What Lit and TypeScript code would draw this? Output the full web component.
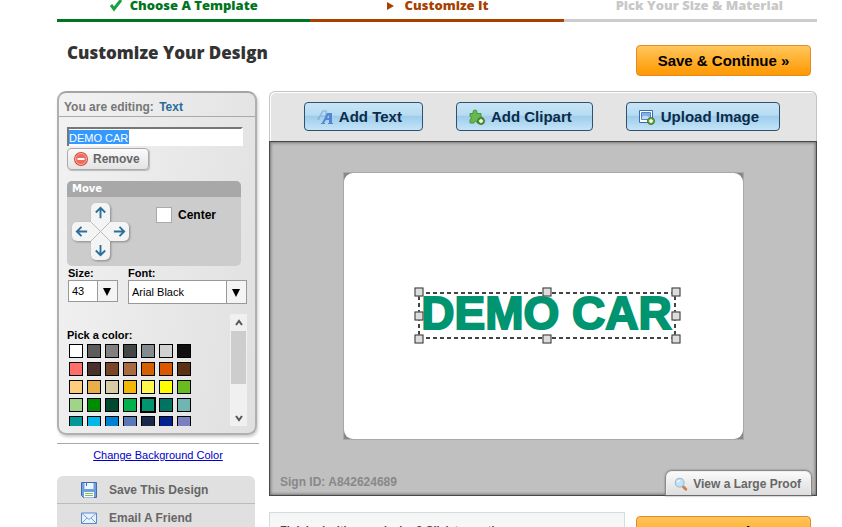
import { LitElement, html, css, svg } from "lit";
import { customElement, state } from "lit/decorators.js";
import { classMap } from "lit/directives/class-map.js";
import { styleMap } from "lit/directives/style-map.js";

const COLORS = [
  "#ffffff", "#5c5c5a", "#808080", "#434748", "#838b8e", "#d0d2d2", "#101010",
  "#ff6e6a", "#4a302c", "#7a4626", "#a86c40", "#d66000", "#dc5800", "#5c3216",
  "#ffce7c", "#e8ae48", "#d8cca4", "#f0b800", "#fff84c", "#ffff00", "#68bc20",
  "#a0d488", "#008c00", "#004830", "#00b04c", "#009470", "#007460", "#70b4b4",
  "#009898", "#00b8e8", "#0080d0", "#5878b8", "#182848", "#002090", "#7880c0",
];

const MOVES = [
  { name: "up", path: "M8 14V3M3 8l5-5 5 5" },
  { name: "left", path: "M14 8H3M8 3L3 8l5 5" },
  { name: "right", path: "M2 8h11M8 3l5 5-5 5" },
  { name: "down", path: "M8 2v11M3 8l5 5 5-5" },
];

const HANDLES = ["nw", "n", "ne", "w", "e", "sw", "s", "se"];

const icon = (w: number, body: unknown) =>
  html`<svg class="icon" width=${w} height=${w} viewBox="0 0 16 16" aria-hidden="true">${body}</svg>`;

const icons = {
  text: svg`<path d="M0 10h3M1 10L6 2h3v6M3 7h5" fill="none" stroke="#86aede" stroke-width="1.2"/>
    <path d="M4 14h1l5-10h5v10h1v1h-5v-1h1v-3H9l-2 3h1v1H4zM10 9h2V6z" fill="#5487d2"/>`,
  clip: svg`<path d="M1 4.500h3V3a2 2 0 014 0v1.500h4V8a2 2 0 010 4v2H8v-1a2 2 0 00-3 0v1H1v-3.500a1.500 1.500 0 000-3z" fill="#68b852" stroke="#45983a"/>
    <circle cx="12" cy="12" r="3.500" fill="#5a9a34" stroke="#3f7c24"/><path d="M12 10v4M10 12h4" stroke="#fff" stroke-width="1.400"/>`,
  image: svg`<path d="M.5 1.500h13v12H.5z" fill="#fff" stroke="#386cae"/><path d="M2.500 3.500h9v7h-9z" fill="#82b0e4" stroke="#5286c4"/>
    <path d="M3 8q4-3 8 1v1H3z" fill="#c3dbf3"/>
    <circle cx="12" cy="12" r="3.500" fill="#6ba442" stroke="#457d28"/><path d="M12 10v4M10 12h4" stroke="#fff" stroke-width="1.400"/>`,
  remove: svg`<circle cx="8" cy="8" r="7" fill="#d9483c"/><circle cx="8" cy="8" r="5.500" fill="#ec6c5e" stroke="#f6b0a8"/><path d="M4.500 7h7v2h-7z" fill="#fff"/>`,
  save: svg`<path d="M.5.5h15v15h-13l-2-2z" fill="#6f9fdf" stroke="#3d6cb4"/><path d="M3.500 1h9v6h-9z" fill="#eef5fd"/><path d="M5 1h1v3H5z" fill="#3d6cb4"/>
    <path d="M3 10h10v5.500H3z" fill="#fff"/><path d="M4 11.500h8M4 13.500h8" stroke="#7cc05c"/>`,
  mail: svg`<path d="M.5 3h15v10.500H.5z" fill="#e8f1fc" stroke="#5a8acb"/><path d="M1 3.500l7 6 7-6M1 13l5-5M15 13l-5-5" fill="none" stroke="#7ba3d9"/>`,
  magnify: svg`<path d="M9.500 10l4 4" stroke="#c98150" stroke-width="3.200" stroke-linecap="round"/><circle cx="6.500" cy="6.500" r="5" fill="#c4e2f7" stroke="#a4bfd4" stroke-width="1.500"/><path d="M4 6a3 3 0 013-2" stroke="#fff" stroke-width="1.400" fill="none"/>`,
};

@customElement("app-root")
export class AppRoot extends LitElement {
  @state() private selected = 25;
  @state() private label = "DEMO CAR";

  static styles = css`
    :host { display: block; height: 100vh; overflow: hidden; background: #fff;
      font: 11px/16px "Liberation Sans", Arial, sans-serif; color: #000; }
    * { box-sizing: border-box; }
    button, input, select { font: inherit; color: inherit; margin: 0; }
    button { cursor: pointer; }
    .page { margin: 0 25px 0 57px; }
    .black { font-family: "Open Sans", "Arial Black", sans-serif; font-weight: 800; }
    .steps { display: grid; grid-template-columns: repeat(3, 1fr); margin: 0; padding: 0; list-style: none; }
    .step { display: flex; justify-content: center; align-items: center; gap: 8px; height: 22px; padding-bottom: 8px;
      border-bottom: 3px solid; font-size: 13px; line-height: 11px; white-space: nowrap; }
    .done { color: #007420; }
    .now { color: #a84000; gap: 10px; }
    .next { padding-left: 18px; color: #c8c8c8; border-color: #ccc; }
    .heading { display: flex; justify-content: space-between; height: 69px; padding: 23px 6px 0 10px; }
    h1 { margin: 0; font-size: 17px; line-height: 16px; color: #333; }
    .cta { width: 175px; height: 31px; padding: 0; border: 1px solid #e08a2c; border-radius: 4px;
      background: linear-gradient(#ffc65c, #ff9800); font-size: 15px; font-weight: bold; color: #000; }
    .cols { display: grid; grid-template-columns: 200px minmax(0, 1fr); gap: 12px; align-items: start; }
    .panel { border: 2px solid #b0b0b0; border-top-color: #a4a4a4; border-radius: 9px; height: 344px;
      background: linear-gradient(100deg, #f2f2f2, #e0e0e0); box-shadow: 1px 2px 3px #ccc; }
    .tab { height: 24px; padding: 6px 0 0 5px; border-bottom: 1px solid #aaa; font-size: 12px; font-weight: bold; color: #777; }
    .tab b { margin-left: 2px; color: #2c6c98; }
    .body { padding: 10px 8px 0; }
    .field { display: flex; width: 176px; height: 19px; border: 2px solid #777; border-right-color: #fff; border-bottom: 0; background: #fff; }
    .field input { width: 100%; min-width: 0; border: 0; padding: 0; outline: 0; font-size: 11px; color: #fff;
      background: linear-gradient(#3399ff, #3399ff) 0 1px / 60px 14px no-repeat; }
    .remove { display: flex; align-items: center; gap: 4px; height: 22px; margin: 2px 0 11px; padding: 0 8px 0 5px; border: 1px solid #aaa;
      border-radius: 4px; background: linear-gradient(#fafafa, #e4e4e4); box-shadow: 1px 1px 1px #bbb; font-size: 12px; font-weight: bold; color: #666; }
    .move { width: 174px; height: 85px; border-radius: 5px; overflow: hidden; background: #ccc; }
    .move h2 { margin: 0; padding-left: 5px; font: bold 10px/16px "DejaVu Sans", Verdana, sans-serif; color: #fff; background: #a8a8a8; }
    .mover { display: flex; gap: 27px; padding: 6px 5px 0; }
    .pad { display: grid; grid-template-columns: repeat(3, 19px); grid-template-rows: repeat(3, 19px);
      grid-template-areas: ". up ." "left mid right" ". down ."; filter: drop-shadow(1px 1px 1px #888); }
    .pad button { padding: 0; border: 0; background: #f4f4f4; display: grid; place-items: center; color: #2a7098; }
    .up { grid-area: up; border-radius: 5px 5px 0 0; }
    .left { grid-area: left; border-radius: 5px 0 0 5px; }
    .right { grid-area: right; border-radius: 0 5px 5px 0; }
    .down { grid-area: down; border-radius: 0 0 5px 5px; }
    .mid { grid-area: mid; background: #f4f4f4; }
    .icon, .pad svg, .mark { display: block; flex: none; }
    .center { display: flex; align-items: center; gap: 6px; height: 16px; margin-top: 4px; font-size: 12px; font-weight: bold; }
    .center input { appearance: none; width: 16px; height: 16px; border: 1px solid #aaa; background: #fff; }
    .pickers { display: flex; gap: 10px; margin: 0 -4px 10px 1px; }
    .pickers label { display: block; font-weight: bold; line-height: 14px; }
    .combo { display: block; position: relative; }
    .combo select { appearance: none; display: block; width: 100%; height: 22px; padding: 0 3px; border: 1px solid #999; border-radius: 0; background: #fff; font-size: 11px; }
    .combo .wide { height: 24px; }
    .combo svg { position: absolute; right: 1px; top: 1px; height: calc(100% - 2px); width: 20px; border-left: 1px solid #999; background: #f4f4f4; pointer-events: none; }
    .size { width: 50px; }
    .font { width: 119px; }
    .colors { display: flex; justify-content: space-between; width: 180px; height: 112px; overflow: hidden; }
    .colors h2 { margin: 14px 0 0; font-size: 11px; line-height: 14px; }
    .swatches { display: grid; grid-template-columns: repeat(7, 14px); gap: 4px; padding: 2px; }
    .swatch { width: 14px; height: 14px; padding: 0; border: 1px solid #000; }
    .on { outline: 1px solid #000; }
    .scroll { display: flex; flex-direction: column; align-items: center; width: 17px; height: 112px; background: #f0f0f0; }
    .scroll svg, .thumb { flex: none; }
    .thumb { width: 15px; height: 53px; background: #cdcdcd; }
    .rule { margin: 8px -2px 3px 0; border: 0; border-top: 1px solid #aaa; }
    .change { display: block; text-align: center; color: #0000c8; line-height: 16px; font-size: 11px; margin-bottom: 13px; padding-left: 2px; }
    .menu { margin: 0 2px 0 0; padding: 0; list-style: none; border-radius: 6px 6px 0 0; overflow: hidden; background: #e0e0e0; }
    .menu a { display: flex; align-items: center; gap: 12px; height: 28px; padding-left: 24px; border-bottom: 1px solid #bbb;
      font-size: 12px; font-weight: bold; color: #666; text-decoration: none; }
    .tools { display: flex; justify-content: center; align-items: center; gap: 33px; height: 50px; padding-right: 2px; border: 1px solid #c4c4c4;
      border-bottom: 0; border-radius: 6px 6px 0 0; background: #e4e4e4; box-shadow: inset 1px 1px #fff; }
    .tool { display: flex; align-items: center; gap: 6px; height: 29px; padding: 0 20px 0 12px; border: 1px solid #31506c; border-radius: 4px;
      background: linear-gradient(#c8e4f6, #b6dcf2 45%, #9ecdeb 50%, #c4e4f8); font-size: 15px; font-weight: bold; color: #0b2b48; white-space: nowrap; }
    .canvas { display: grid; grid-template-rows: 1fr auto; height: 355px; padding: 30px 0 0; border: 1px solid #484848; background: #c0c0c0; box-shadow: inset 0 0 3px 1px #777; }
    .sign { display: grid; place-items: center; justify-self: center; width: 401px; height: 268px; border: 1px solid #a8a8a8; background: #888; }
    .paper { display: grid; place-items: center; width: 100%; height: 100%; border-radius: 9px; background: #fff; padding: 19px 0 0 7px; }
    .art { position: relative; width: 258px; height: 47px; display: grid; place-items: center; }
    .art .frame { position: absolute; inset: 0; width: 100%; height: 100%; }
    .art span { font-size: 46px; font-weight: bold; line-height: 40px; padding-bottom: 6px; color: #009470;
      -webkit-text-stroke: 2px #009470; white-space: nowrap; }
    .handle { position: absolute; width: 9px; height: 9px; border: 1px solid #333; background: #ddd; transform: translate(-50%, -50%); }
    .nw, .w, .sw { left: 1px; } .n, .s { left: 50%; } .ne, .e, .se { left: 100%; }
    .nw, .n, .ne { top: 0; } .w, .e { top: 50%; } .sw, .s, .se { top: 100%; }
    .foot { display: flex; justify-content: space-between; align-items: flex-end; padding: 0 5px 0 10px; font-size: 12px; font-weight: bold; color: #888; }
    .foot span { line-height: 26px; }
    .proof { display: flex; align-items: center; gap: 5px; height: 24px; padding: 0 9px 0 7px; border: 1px solid #eee; border-bottom: 0;
      border-radius: 6px 6px 0 0; background: linear-gradient(#fafafa, #ddd); box-shadow: 0 0 2px 1px #777; font-size: 12px; font-weight: bold; color: #666; }
    .finish { display: flex; gap: 11px; padding: 16px 6px 0 0; }
    .finish p { flex: 1; margin: 0; padding: 9px 10px; border: 1px solid #d4dcdc; background: linear-gradient(#f1f5f4, #fff); font-size: 11px; font-weight: bold; color: #444; }
    .finish .cta { margin-top: 4px; }
  `;

  private combo(id: string, value: string, wide = false) {
    return html`<span class="combo"><select id=${id} class=${classMap({ wide })}><option>${value}</option></select>
      <svg viewBox="0 0 19 20" aria-hidden="true"><path d="M5 7h8l-4 8z" fill="#000"/></svg></span>`;
  }

  render() {
    return html`<div class="page">
      <ol class="steps">
        <li class="step done black"><svg class="mark" width="12" height="12" viewBox="0 0 12 12"><path d="M1 5l3 4 7-9" fill="none" stroke="#1ca040" stroke-width="3"/></svg>Choose A Template</li>
        <li class="step now black"><svg class="mark" width="9" height="8" viewBox="0 0 9 8"><path d="M1 0l7 4-7 4z" fill="#a84000"/></svg>Customize It</li>
        <li class="step next black">Pick Your Size &amp; Material</li>
      </ol>
      <header class="heading"><h1 class="black">Customize Your Design</h1><button class="cta">Save &amp; Continue »</button></header>
      <div class="cols">
        <aside>
          <section class="panel">
            <div class="tab">You are editing: <b>Text</b></div>
            <div class="body">
              <label class="field"><input aria-label="Sign text" .value=${this.label}
                @input=${(e: Event) => (this.label = (e.target as HTMLInputElement).value)} /></label>
              <button class="remove">${icon(16, icons.remove)}Remove</button>
              <div class="move"><h2>Move</h2>
                <div class="mover">
                  <div class="pad"><i class="mid"><svg width="19" height="19"><path d="M0 0l19 19M19 0L0 19" stroke="#bbb"/></svg></i>
                    ${MOVES.map((m) => html`<button class=${m.name} aria-label="Move ${m.name}"><svg width="15" height="15" viewBox="0 0 16 16"><path d=${m.path} fill="none" stroke="currentColor" stroke-width="2"/></svg></button>`)}
                  </div>
                  <label class="center"><input type="checkbox" />Center</label>
                </div>
              </div>
              <div class="pickers">
                <div class="size"><label for="size">Size:</label>${this.combo("size", "43")}</div>
                <div class="font"><label for="font">Font:</label>${this.combo("font", "Arial Black", true)}</div>
              </div>
              <div class="colors">
                <div><h2>Pick a color:</h2>
                  <div class="swatches">${COLORS.map((c, i) => html`<button aria-label=${c} class=${classMap({ swatch: true, on: i === this.selected })}
                    style=${styleMap({ background: c })} @click=${() => (this.selected = i)}></button>`)}</div>
                </div>
                <div class="scroll">
                  <svg width="16" height="17"><path d="M5 11l3-4 3 4" fill="none" stroke="#555" stroke-width="2"/></svg>
                  <div class="thumb"></div>
                  <svg width="16" height="42"><path d="M5 32l3 4 3-4" fill="none" stroke="#555" stroke-width="2"/></svg>
                </div>
              </div>
            </div>
          </section>
          <hr class="rule" />
          <a class="change" href="#">Change Background Color</a>
          <ul class="menu">
            <li><a href="#">${icon(16, icons.save)}Save This Design</a></li>
            <li><a href="#">${icon(16, icons.mail)}Email A Friend</a></li>
          </ul>
        </aside>
        <main>
          <div class="tools">
            <button class="tool">${icon(16, icons.text)}Add Text</button>
            <button class="tool">${icon(16, icons.clip)}Add Clipart</button>
            <button class="tool">${icon(16, icons.image)}Upload Image</button>
          </div>
          <div class="canvas">
            <div class="sign"><div class="paper">
              <div class="art"><svg class="frame"><rect x="1" y="1" width="256" height="45" fill="none" stroke="#444" stroke-width="2" stroke-dasharray="4 3"/></svg>
                <span>${this.label}</span>
                ${HANDLES.map((h) => html`<i class="handle ${h}"></i>`)}
              </div>
            </div></div>
            <div class="foot"><span>Sign ID: A842624689</span><button class="proof">${icon(14, icons.magnify)}View a Large Proof</button></div>
          </div>
          <div class="finish"><p>Finished with your design? Click to continue.</p><button class="cta">Save &amp; Continue »</button></div>
        </main>
      </div>
    </div>`;
  }
}
